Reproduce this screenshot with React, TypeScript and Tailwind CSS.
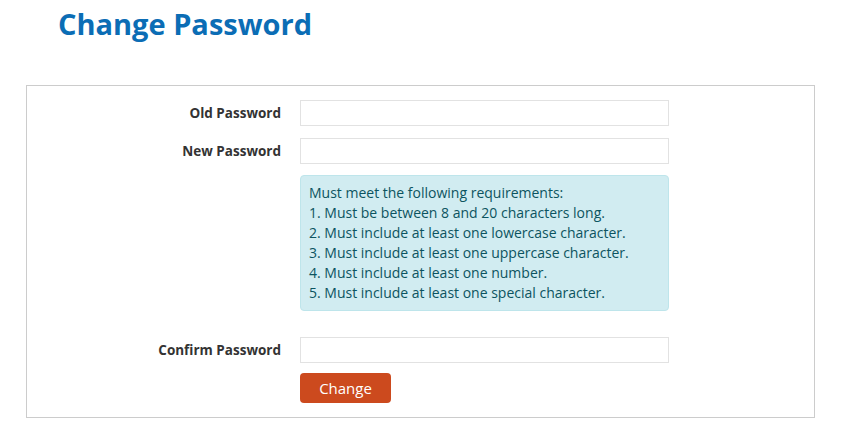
export default function App() {
  const rules = [
    'Must meet the following requirements:',
    '1. Must be between 8 and 20 characters long.',
    '2. Must include at least one lowercase character.',
    '3. Must include at least one uppercase character.',
    '4. Must include at least one number.',
    '5. Must include at least one special character.',
  ];

  return (
    <main className="min-h-screen bg-white font-['Open_Sans',sans-serif] text-[#333]">
      <h1 className="pl-[58px] pt-[4px] text-[29px] font-bold leading-[40px] text-[#0b6db5]">
        Change Password
      </h1>

      <form
        onSubmit={(e) => e.preventDefault()}
        className="ml-[26px] mt-[41px] w-[789px] border border-[#cccccc] pt-[14px] pb-[14px]"
      >
        <div className="flex flex-col gap-[12px]">
          <Row label="Old Password" />
          <Row label="New Password" />
        </div>

        <div className="ml-[273px] mt-[11px] w-[369px] rounded-[4px] border border-[#bee5eb] bg-[#d1ecf1] px-[8px] py-[7px] text-[14px] leading-[20px] text-[#0c5460]">
          {rules.map((r) => (
            <p key={r}>{r}</p>
          ))}
        </div>

        <div className="mt-[26px]">
          <Row label="Confirm Password" />
        </div>

        <div className="ml-[273px] mt-[10px]">
          <button
            type="submit"
            className="h-[30px] w-[91px] rounded-[4px] bg-[#cc4a1e] text-[15px] text-white"
          >
            Change
          </button>
        </div>
      </form>
    </main>
  );
}

function Row({ label }: { label: string }) {
  return (
    <div className="flex items-center">
      <label className="w-[255px] pr-[1px] text-right text-[13.5px] font-bold text-[#333]">
        {label}
      </label>
      <input
        type="password"
        className="ml-[18px] h-[26px] w-[369px] border border-[#e2e2e2] bg-white px-2 text-[13px] outline-none"
      />
    </div>
  );
}
